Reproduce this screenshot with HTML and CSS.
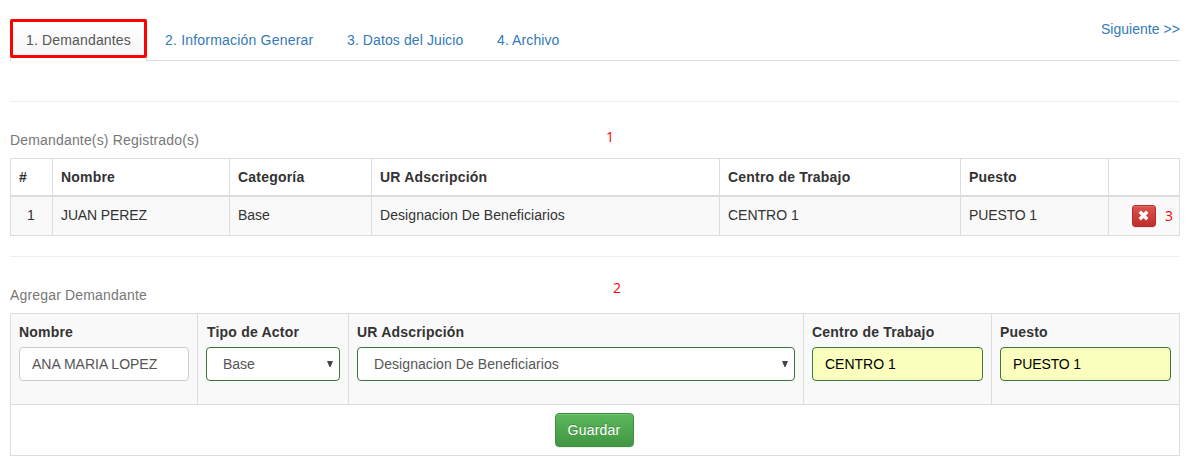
FILE: index.html
```html
<!DOCTYPE html>
<html lang="es">
<head>
<meta charset="utf-8">
<title>Demandantes</title>
<link rel="stylesheet" href="styles.css">
</head>
<body>
<main class="page">
  <header class="topbar">
    <nav class="tabs">
      <a class="tab tab-active">1. Demandantes</a>
      <a class="tab tab-info">2. Información Generar</a>
      <a class="tab tab-data">3. Datos del Juicio</a>
      <a class="tab tab-file">4. Archivo</a>
    </nav>
    <a class="next">Siguiente &gt;&gt;</a>
  </header>
  <section class="block">
    <p class="caption">Demandante(s) Registrado(s)<span class="mark mark-one">1</span></p>
    <table class="table list">
      <colgroup><col class="c-num"><col class="c-name"><col class="c-cat"><col class="c-ur"><col class="c-center"><col class="c-post"><col class="c-action"></colgroup>
      <thead>
        <tr><th>#</th><th>Nombre</th><th>Categoría</th><th>UR Adscripción</th><th>Centro de Trabajo</th><th>Puesto</th><th></th></tr>
      </thead>
      <tbody>
        <tr>
          <td class="num">1</td><td class="upper">JUAN PEREZ</td><td>Base</td><td class="unit">Designacion De Beneficiarios</td><td>CENTRO 1</td><td class="upper">PUESTO 1</td>
          <td class="action">
            <div class="actions">
              <button class="remove" type="button" aria-label="Eliminar"><svg class="cross" viewBox="0 0 12 12"><path d="M3.2.6 6 3.4 8.800.6 11.400 3.200 8.600 6 11.400 8.800 8.800 11.400 6 8.600 3.200 11.400.6 8.800 3.400 6 .6 3.200z"/></svg></button>
              <span class="mark-three">3</span>
            </div>
          </td>
        </tr>
      </tbody>
    </table>
  </section>
  <section class="block block-form">
    <p class="caption">Agregar Demandante<span class="mark mark-two">2</span></p>
    <table class="table form">
      <colgroup><col class="f-name"><col class="f-type"><col class="f-ur"><col class="f-text"><col class="f-text"></colgroup>
      <tbody>
        <tr class="fields">
          <td><label class="label">Nombre</label><input class="control" value="ANA MARIA LOPEZ"></td>
          <td><label class="label label-type">Tipo de Actor</label><div class="control select valid"><span>Base</span><svg class="arrow" viewBox="0 0 6 6"><path d="M0 0h6L3.500 6h-1z"/></svg></div></td>
          <td><label class="label">UR Adscripción</label><div class="control select valid unit"><span>Designacion De Beneficiarios</span><svg class="arrow" viewBox="0 0 6 6"><path d="M0 0h6L3.500 6h-1z"/></svg></div></td>
          <td><label class="label">Centro de Trabajo</label><input class="control valid filled" value="CENTRO 1"></td>
          <td><label class="label">Puesto</label><input class="control valid filled upper" value="PUESTO 1"></td>
        </tr>
        <tr class="submit"><td colspan="5"><button class="save" type="button">Guardar</button></td></tr>
      </tbody>
    </table>
  </section>
</main>
</body>
</html>
```
FILE: styles.css
```css
* { box-sizing: border-box; }
body {
  margin: 0;
  background: #fff;
  color: #333;
  font: 14px/20px "Liberation Sans", Arial, sans-serif;
}
.page { width: 1170px; margin-left: 10px; padding-top: 19px; }
.topbar {
  display: flex;
  justify-content: space-between;
  align-items: flex-start;
  height: 42px;
  border-bottom: 1px solid #ddd;
}
.tabs { display: flex; gap: 2px; }
.tab { height: 41px; padding: 11px 16px; color: #337ab7; white-space: nowrap; }
.tab-active {
  position: relative;
  width: 137px;
  height: 42px;
  color: #555;
  background: linear-gradient(#fff, #f7f7f7 36px, #fff 39px);
  border: solid #ddd;
  border-width: 0 1px;
  padding: 11px 15px;
  letter-spacing: .16px;
}
.tab-active::after {
  content: "";
  position: absolute;
  inset: 0 -1px 3px;
  border: 3px solid #f00;
  border-radius: 2px;
}
.tab-info { width: 180px; letter-spacing: .2px; }
.tab-data { width: 148px; letter-spacing: .1px; }
.tab-file { letter-spacing: .1px; }
.next { color: #337ab7; letter-spacing: .04px; }
.block { margin-top: 40px; padding-top: 28px; border-top: 1px solid #eee; }
.block-form { margin-top: 20px; }
.caption { position: relative; margin: 0 0 8px; color: #777; letter-spacing: .17px; }
.mark { position: absolute; top: -3px; color: #f00; font-family: "Open Sans", sans-serif; letter-spacing: 0; }
.mark-one { left: 596px; }
.mark-two { left: 603px; top: -7px; }
.table {
  width: 1170px;
  table-layout: fixed;
  border: solid #ddd;
  border-width: 1px 0 0 1px;
  border-collapse: separate;
  border-spacing: 0;
}
.table th, .table td { padding: 8px; border: solid #ddd; border-width: 0 1px 1px 0; text-align: left; }
.list th { height: 38px; border-bottom-width: 2px; letter-spacing: .2px; }
.table.list td { height: 39px; padding-top: 0; padding-bottom: 2px; background: #f9f9f9; }
.c-num { width: 42px; }
.c-name { width: 177px; }
.c-cat { width: 142px; }
.c-ur { width: 348px; }
.c-center { width: 241px; }
.c-post { width: 148px; }
.c-action { width: 71px; }
.table.list .num { text-align: center; padding-right: 9px; }
.table.list .action { padding: 0 6px 0 23px; }
.upper { letter-spacing: -.12px; }
.unit { letter-spacing: .07px; }
.actions { display: flex; align-items: center; justify-content: space-between; }
.remove {
  display: flex;
  align-items: center;
  justify-content: center;
  width: 24px;
  height: 22px;
  padding: 0 1px 2px 0;
  border: 1px solid #b92c28;
  border-radius: 3px;
  background: linear-gradient(#d9534f, #c12e2a);
  box-shadow: inset 0 1px 0 rgba(255,255,255,.15), 0 1px 1px rgba(0,0,0,.075);
}
.cross { width: 11px; height: 11px; fill: #fff; }
.mark-three { color: #f00; font-family: "Open Sans", sans-serif; }
.f-name { width: 187px; }
.f-type { width: 151px; }
.f-ur { width: 455px; }
.f-text { width: 188px; }
.fields td { height: 91px; vertical-align: top; background: #f9f9f9; }
.label { display: block; margin-bottom: 5px; font-weight: 700; letter-spacing: .2px; }
.label-type { padding-left: 1px; }
.control {
  display: block;
  width: 100%;
  height: 34px;
  padding: 6px 12px;
  border: 1px solid #ccc;
  border-radius: 4px;
  background: #fff;
  color: #555;
  font: inherit;
}
.valid { border-color: #3c763d; }
.filled { background: #faffbd; color: #000; }
.select { display: flex; align-items: center; justify-content: space-between; padding: 6px 6px 6px 16px; }
.arrow { width: 6px; height: 6px; margin-bottom: 1px; fill: #444; }
.table .submit td { height: 51px; padding: 0 2px 0 0; text-align: center; }
.save {
  height: 34px;
  width: 79px;
  padding: 0;
  border: 1px solid #3e8f3e;
  border-radius: 4px;
  background: linear-gradient(#5cb85c, #419641);
  color: #fff;
  font: inherit;
  letter-spacing: .2px;
  text-shadow: 0 -1px 0 rgba(0,0,0,.2);
  box-shadow: inset 0 1px 0 rgba(255,255,255,.15), 0 1px 1px rgba(0,0,0,.075);
}
```
